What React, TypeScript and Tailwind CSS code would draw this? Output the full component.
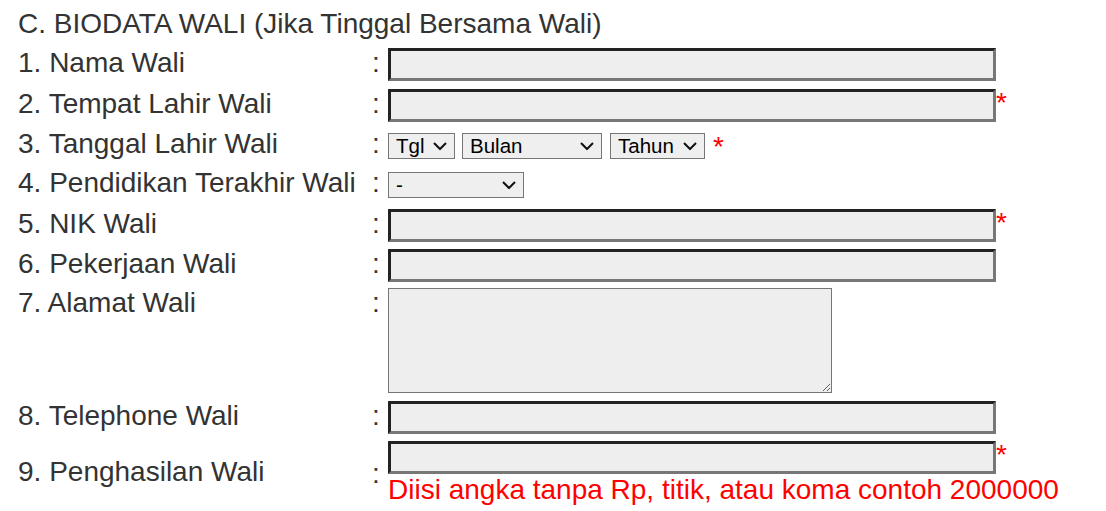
import React from "react";

const font = { fontFamily: '"Liberation Sans", Arial, sans-serif' };

function Star({ className = "" }: { className?: string }) {
  return <span className={`text-[28px] leading-none text-[#ff0000] ${className}`}>*</span>;
}

function Field({ star = false }: { star?: boolean }) {
  return (
    <div className="flex items-start">
      <input
        type="text"
        className="w-[608px] h-[33px] bg-[#eeeeee] border-[3px] border-t-[#222222] border-l-[#222222] border-b-[#777777] border-r-[#777777] outline-none"
      />
      {star && <Star />}
    </div>
  );
}

function Chevron() {
  return (
    <svg
      className="pointer-events-none absolute right-[8px] top-1/2 -translate-y-1/2"
      width="14"
      height="9"
      viewBox="0 0 14 9"
      fill="none"
    >
      <path d="M1 1.5l6 6 6-6" stroke="#111" strokeWidth="2" />
    </svg>
  );
}

function Select({ label, w }: { label: string; w: string }) {
  return (
    <div className={`relative ${w}`}>
      <select
        className="block w-full h-[26px] appearance-none bg-[#efefef] border border-[#767676] pl-[7px] text-[20.5px] leading-[24px] text-black outline-none"
        style={font}
        defaultValue=""
      >
        <option value="">{label}</option>
      </select>
      <Chevron />
    </div>
  );
}

function Row({
  label,
  h,
  children,
}: {
  label: string;
  h: string;
  children: React.ReactNode;
}) {
  return (
    <div className={`flex items-center ${h}`}>
      <div className="w-[354px] leading-[32px] mb-[3px]">{label}</div>
      <div className="w-[16px] leading-[32px] mb-[3px]">:</div>
      {children}
    </div>
  );
}

export default function App() {
  return (
    <div className="bg-white min-h-screen pl-[18px] text-[28px] text-[#333333]" style={font}>
      <div className="h-[44px] pt-[8px] leading-[32px]">C. BIODATA WALI (Jika Tinggal Bersama Wali)</div>

      <Row label="1. Nama Wali" h="h-[41px]">
        <Field />
      </Row>
      <Row label="2. Tempat Lahir Wali" h="h-[41px]">
        <Field star />
      </Row>
      <Row label="3. Tanggal Lahir Wali" h="h-[39px]">
        <div className="flex items-center">
          <Select label="Tgl" w="w-[67px]" />
          <Select label="Bulan" w="w-[140px] ml-[7px]" />
          <Select label="Tahun" w="w-[95px] ml-[8px]" />
          <Star className="ml-[8px] self-start -mb-[4px]" />
        </div>
      </Row>
      <Row label="4. Pendidikan Terakhir Wali" h="h-[39px]">
        <Select label="-" w="w-[136px]" />
      </Row>
      <Row label="5. NIK Wali" h="h-[42px]">
        <Field star />
      </Row>
      <Row label="6. Pekerjaan Wali" h="h-[39px]">
        <Field />
      </Row>

      <div className="flex items-start h-[112px]">
        <div className="w-[354px] leading-[32px] mt-[2px]">7. Alamat Wali</div>
        <div className="w-[16px] leading-[32px] mt-[2px]">:</div>
        <textarea className="mt-[3px] w-[444px] h-[105px] bg-[#eeeeee] border border-[#767676] resize outline-none" />
      </div>

      <Row label="8. Telephone Wali" h="h-[41px]">
        <Field />
      </Row>

      <div className="flex items-center h-[68px]">
        <div className="w-[354px] leading-[32px]">9. Penghasilan Wali</div>
        <div className="w-[16px] leading-[32px] mt-[4px]">:</div>
        <div className="flex flex-col self-start pt-[3px]">
          <Field star />
          <div className="text-[28px] leading-[32px] text-[#ff0000]">
            Diisi angka tanpa Rp, titik, atau koma contoh 2000000
          </div>
        </div>
      </div>
    </div>
  );
}
